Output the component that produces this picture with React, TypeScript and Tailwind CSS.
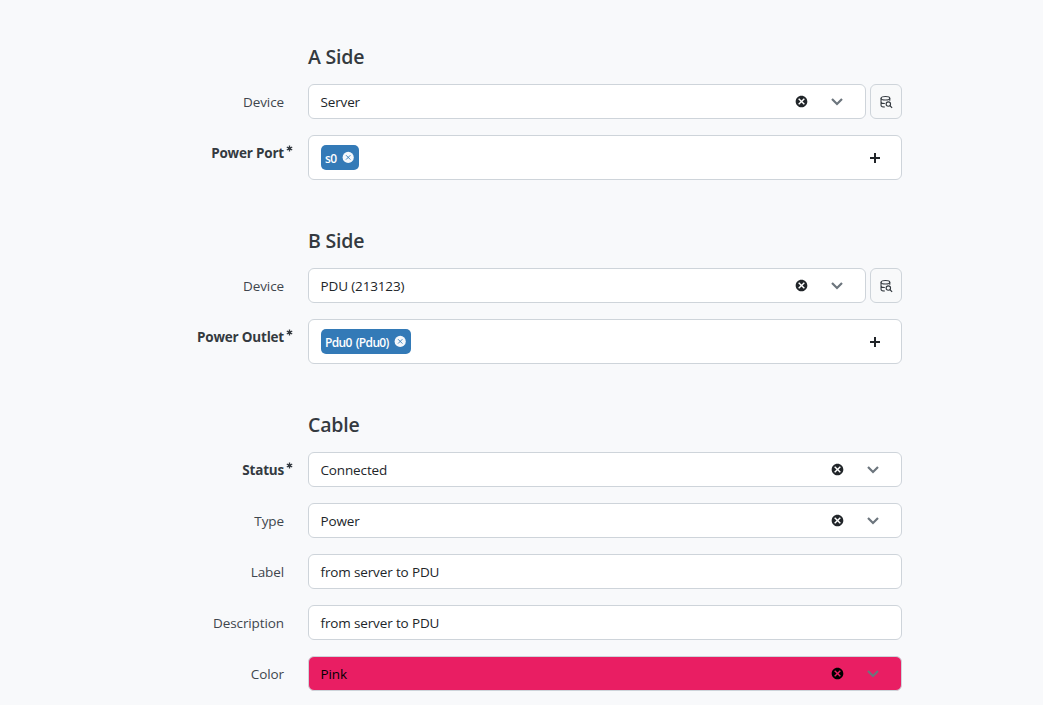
import type { ReactNode } from 'react';

const CLOSE_CIRCLE_BOLD =
  'M12 2C17.5 2 22 6.500 22 12S17.500 22 12 22 2 17.500 2 12 6.500 2 12 2M16 6.300 12 10.300 8 6.300 6.300 8 10.300 12 6.300 16 8 17.700 12 13.700 16 17.700 17.700 16 13.700 12 17.700 8Z';

function CloseCircle() {
  return (
    <svg viewBox="-0.85 -0.85 25.7 25.7" className="mr-[22px] size-[15px] shrink-0" fill="currentColor" fillRule="evenodd">
      <path d={CLOSE_CIRCLE_BOLD} />
    </svg>
  );
}

function TagRemove() {
  return (
    <svg viewBox="0 0 14 14" className="mb-px size-3.5 shrink-0">
      <circle cx="7.2" cy="7.4" r="5.6" fill="#f4f8fb" />
      <path d="m5 5.200 4.400 4.400M9.400 5.200 5 9.600" stroke="#337ab7" strokeWidth="0.9" />
    </svg>
  );
}

function Chevron() {
  return (
    <svg width="12" height="9" viewBox="0 0 12 9" className="shrink-0 text-[#6c757d]" fill="none" stroke="currentColor" strokeWidth="2.2">
      <path d="M1 2 6 7 11 2" />
    </svg>
  );
}

function Plus() {
  return (
    <svg width="10" height="10" viewBox="0 0 10 10" className="shrink-0 text-[#212529]" fill="currentColor">
      <path d="M4 0h2v4h4v2H6v4H4V6H0V4h4z" />
    </svg>
  );
}

function Asterisk() {
  return (
    <svg viewBox="0 0 7 7" className="absolute top-[10px] left-[286px] size-[7px]" fill="none" stroke="#343a40" strokeWidth="1.35">
      <path d="M3.500 .4v6.200M.8 2l5.400 3M6.200 2 .8 5" />
      <circle cx="3.5" cy="3.5" r="1" />
    </svg>
  );
}

function DatabaseSearch() {
  return (
    <svg width="14" height="14" viewBox="0 0 24 24" fill="none" stroke="currentColor" strokeWidth="1.9">
      <ellipse cx="11" cy="5.500" rx="7.5" ry="3" />
      <path d="M3.500 5.500v12c0 1.700 3 3 6.500 3M3.500 11.500c0 1.700 3 3 6.500 3M18.500 5.500v4.500" />
      <circle cx="16" cy="15.500" r="3.800" />
      <path d="m18.500 18 4 4" />
    </svg>
  );
}

function Heading({ children }: { children: ReactNode }) {
  return <h5 className="ml-[308px] h-6 text-[19.500px] leading-6 font-semibold tracking-[-0.200px] text-[#343a40]">{children}</h5>;
}

function Row({ label, required, children }: { label: string; required?: boolean; children: ReactNode }) {
  return (
    <div className="flex">
      <div className={`relative h-[35px] w-[284px] text-right leading-[36px] whitespace-nowrap ${required ? 'font-bold tracking-[-0.200px] text-[#343a40]' : 'tracking-[-0.100px] text-[#3f464d]'}`}>
        {label}
        {required && <Asterisk />}
      </div>
      <div className="ml-6 flex w-[594px] gap-1">{children}</div>
    </div>
  );
}

function Select({ value, pink }: { value: string; pink?: boolean }) {
  return (
    <div className={`flex h-[35px] flex-1 items-center rounded-md border border-[#ced4da] pr-[22px] pl-[11.500px] ${pink ? 'bg-[#e91e63] text-black' : 'bg-white text-[#212529]'}`}>
      <span className="flex-1 pt-px">{value}</span>
      <CloseCircle />
      <Chevron />
    </div>
  );
}

function MultiSelect({ value, width }: { value: string; width: string }) {
  return (
    <div className="flex h-[45px] flex-1 items-center justify-between rounded-md border border-[#ced4da] bg-white pr-[21px] pl-3">
      <div className={`flex h-[25px] items-center justify-between rounded-[5px] bg-[#337ab7] pr-1 pl-1 text-white ${width}`}>
        <span className="pt-[3px] text-[12px] leading-4 font-semibold tracking-[-0.650px] whitespace-nowrap [word-spacing:1.5px]">{value}</span>
        <TagRemove />
      </div>
      <Plus />
    </div>
  );
}

function TextInput({ value }: { value: string }) {
  return (
    <div className="flex h-[35px] flex-1 items-center rounded-md border border-[#ced4da] bg-white pl-[11.500px] text-[#212529]">
      <span className="pt-px">{value}</span>
    </div>
  );
}

function SearchButton() {
  return (
    <button aria-label="Search" className="flex h-[35px] w-8 items-center justify-center rounded-md border border-[#ced4da] bg-[#f8f9fa] text-[#343a40]">
      <DatabaseSearch />
    </button>
  );
}

export default function App() {
  return (
    <main className="h-[705px] w-[1043px] overflow-hidden bg-[#f8f9fb] pt-[45px] font-['Open_Sans','Noto_Sans',sans-serif] text-[13.500px] tracking-[-0.140px]">
      <section className="h-[184px]">
        <Heading>A Side</Heading>
        <div className="mt-[15px] flex flex-col gap-4">
          <Row label="Device">
            <Select value="Server" />
            <SearchButton />
          </Row>
          <Row label="Power Port" required>
            <MultiSelect value="s0" width="w-[38px]" />
          </Row>
        </div>
      </section>
      <section className="h-[184px]">
        <Heading>B Side</Heading>
        <div className="mt-[15px] flex flex-col gap-4">
          <Row label="Device">
            <Select value="PDU (213123)" />
            <SearchButton />
          </Row>
          <Row label="Power Outlet" required>
            <MultiSelect value="Pdu0 (Pdu0)" width="w-[90px]" />
          </Row>
        </div>
      </section>
      <section>
        <Heading>Cable</Heading>
        <div className="mt-[15px] flex flex-col gap-4">
          <Row label="Status" required>
            <Select value="Connected" />
          </Row>
          <Row label="Type">
            <Select value="Power" />
          </Row>
          <Row label="Label">
            <TextInput value="from server to PDU" />
          </Row>
          <Row label="Description">
            <TextInput value="from server to PDU" />
          </Row>
          <Row label="Color">
            <Select value="Pink" pink />
          </Row>
        </div>
      </section>
    </main>
  );
}
